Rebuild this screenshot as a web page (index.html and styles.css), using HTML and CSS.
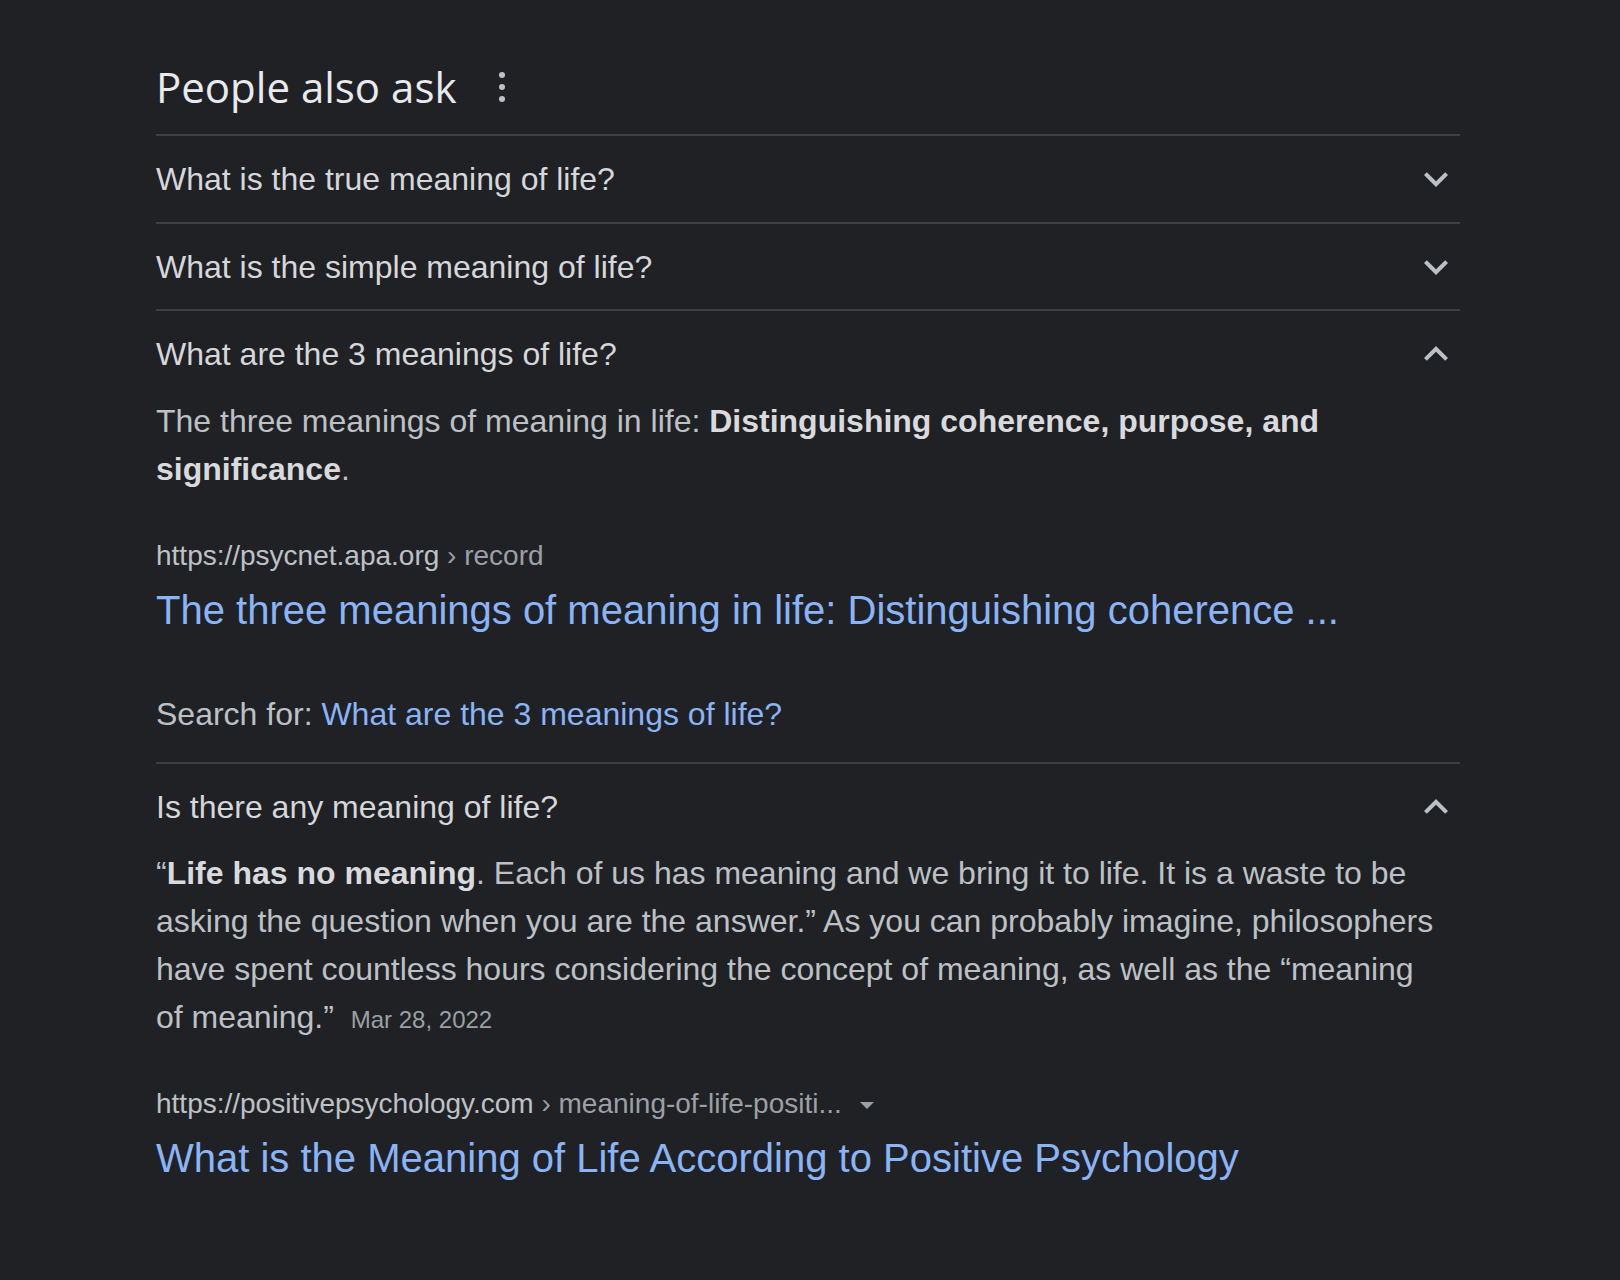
FILE: index.html
```html
<!DOCTYPE html>
<html lang="en">
<head>
<meta charset="utf-8">
<title>People also ask</title>
<link rel="stylesheet" href="styles.css">
</head>
<body>
<div class="paa">
  <div class="paa-head">
    <h2 class="paa-title">People also ask</h2>
    <span class="kebab"><svg viewBox="0 0 24 24"><circle cx="12" cy="4" r="2"/><circle cx="12" cy="12" r="2"/><circle cx="12" cy="20" r="2"/></svg></span>
  </div>

  <div class="item">
    <div class="q">
      <span class="q-text">What is the true meaning of life?</span>
      <svg class="chev" viewBox="0 0 24 24"><path d="M16.59 8.59L12 13.17 7.41 8.59 6 10l6 6 6-6z"/></svg>
    </div>
  </div>

  <div class="item">
    <div class="q">
      <span class="q-text">What is the simple meaning of life?</span>
      <svg class="chev" viewBox="0 0 24 24"><path d="M16.59 8.59L12 13.17 7.41 8.59 6 10l6 6 6-6z"/></svg>
    </div>
  </div>

  <div class="item item-open">
    <div class="q">
      <span class="q-text">What are the 3 meanings of life?</span>
      <svg class="chev" viewBox="0 0 24 24"><path d="M12 8l-6 6 1.41 1.41L12 10.83l4.59 4.58L18 14z"/></svg>
    </div>
    <div class="ans">The three meanings of meaning in life: <b>Distinguishing coherence, purpose, and significance</b>.</div>
    <div class="src">
      <div class="cite">https://psycnet.apa.org <span class="crumb">› record</span></div>
      <a class="title-link" href="#">The three meanings of meaning in life: Distinguishing coherence ...</a>
    </div>
    <div class="search-for">Search for: <a href="#">What are the 3 meanings of life?</a></div>
  </div>

  <div class="item">
    <div class="q">
      <span class="q-text">Is there any meaning of life?</span>
      <svg class="chev" viewBox="0 0 24 24"><path d="M12 8l-6 6 1.41 1.41L12 10.83l4.59 4.58L18 14z"/></svg>
    </div>
    <div class="ans">“<b>Life has no meaning</b>. Each of us has meaning and we bring it to life. It is a waste to be asking the question when you are the answer.” As you can probably imagine, philosophers have spent countless hours considering the concept of meaning, as well as the “meaning of meaning.” <span class="date">Mar 28, 2022</span></div>
    <div class="src">
      <div class="cite">https://positivepsychology.com <span class="crumb">› meaning-of-life-positi...</span><span class="caret"></span></div>
      <a class="title-link" href="#">What is the Meaning of Life According to Positive Psychology</a>
    </div>
  </div>
</div>
</body>
</html>
```

FILE: styles.css
```css
html, body {
  margin: 0;
  background: #202124;
}

body {
  font-family: "Liberation Sans", Arial, sans-serif;
  color: #bdc1c6;
}

.paa {
  margin-left: 156px;
  width: 1304px;
  padding-top: 57px;
}

.paa-head {
  display: flex;
  align-items: center;
  gap: 28px;
  height: 60px;
  margin-bottom: 17px;
}

.paa-title {
  margin: 0;
  font-family: "Open Sans", sans-serif;
  font-weight: 400;
  font-size: 42px;
  line-height: 60px;
  color: #e8eaed;
}

.kebab svg {
  display: block;
  width: 36px;
  height: 36px;
  fill: #bdc1c6;
}

.item {
  border-top: 2px solid #3c4043;
}

.item-open {
  padding-bottom: 24px;
}

.q {
  display: flex;
  justify-content: space-between;
  align-items: center;
  padding: 19px 0 18.5px;
}

.q-text {
  font-size: 32px;
  line-height: 48px;
  color: #d5d7da;
}

.chev {
  width: 48px;
  height: 48px;
  fill: #bdc1c6;
}

.ans {
  width: 1288px;
  font-size: 32px;
  line-height: 48px;
  color: #bdc1c6;
}

.ans b {
  color: #d8dadd;
  font-weight: 700;
}

.date {
  font-size: 24px;
  line-height: 1;
  color: #9aa0a6;
  margin-left: 8px;
}

.src {
  margin-top: 43px;
}

.cite {
  font-size: 28px;
  line-height: 40px;
  color: #bdc1c6;
}

.crumb {
  color: #9aa0a6;
}

.caret {
  display: inline-block;
  margin-left: 18px;
  vertical-align: middle;
  border-left: 7px solid transparent;
  border-right: 7px solid transparent;
  border-top: 7px solid #9aa0a6;
}

.title-link {
  display: block;
  margin-top: 8px;
  font-size: 40px;
  line-height: 52px;
  color: #8ab4f8;
  text-decoration: none;
}

.search-for {
  margin-top: 54px;
  font-size: 32px;
  line-height: 48px;
  color: #bdc1c6;
}

.search-for a {
  color: #8ab4f8;
  text-decoration: none;
}
```
